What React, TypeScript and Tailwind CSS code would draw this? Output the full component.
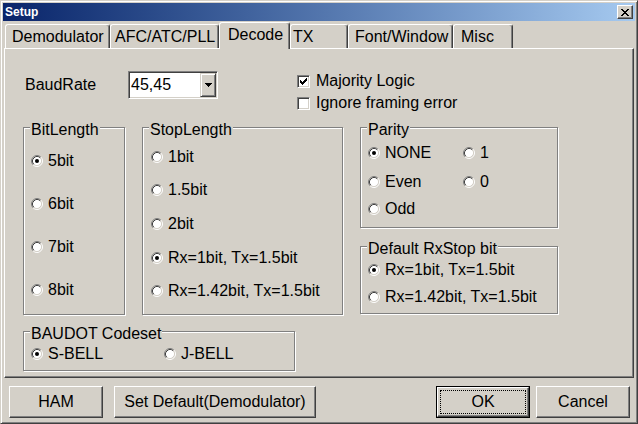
import React from 'react';

type Kids = { children?: React.ReactNode; className?: string };

const Radio = ({ checked }: { checked?: boolean }) => (
  <svg width="12" height="12" viewBox="0 0 12 12" className="shrink-0">
    <circle cx="6" cy="6" r="4.5" fill="#fff" />
    <path d="M2.11 9.89 A5.5 5.5 0 0 1 9.89 2.11" fill="none" stroke="#808080" />
    <path d="M9.89 2.11 A5.5 5.5 0 0 1 2.11 9.89" fill="none" stroke="#fff" />
    <path d="M2.82 9.18 A4.5 4.5 0 0 1 9.18 2.82" fill="none" stroke="#404040" />
    <path d="M9.18 2.82 A4.5 4.5 0 0 1 2.82 9.18" fill="none" stroke="#d4d0c8" />
    {checked && <circle cx="6" cy="6" r="2" fill="#000" />}
  </svg>
);

const Opt = ({ label, checked, className }: { label: string; checked?: boolean; className?: string }) => (
  <div className={`flex h-[20px] items-center gap-[5px] ${className ?? ''}`}>
    <Radio checked={checked} />
    <span className="leading-[20px] whitespace-nowrap">{label}</span>
  </div>
);

const Check = ({ checked }: { checked?: boolean }) => (
  <div className="flex h-[13px] w-[13px] shrink-0 items-center justify-center border border-t-[#808080] border-l-[#808080] border-r-white border-b-white bg-white shadow-[inset_1px_1px_0_#404040,inset_-1px_-1px_0_#d4d0c8]">
    {checked && (
      <svg width="7" height="7" viewBox="0 0 7 7" shapeRendering="crispEdges">
        <path
          d="M0 2h1v3h-1z M1 3h1v3h-1z M2 4h1v3h-1z M3 3h1v3h-1z M4 2h1v3h-1z M5 1h1v3h-1z M6 0h1v3h-1z"
          fill="#000"
        />
      </svg>
    )}
  </div>
);

// etched group box, title sits on the top line
const Group = ({ title, className, children }: Kids & { title: string }) => (
  <div
    className={`shrink-0 border border-[#808080] shadow-[1px_1px_0_#fff,inset_1px_1px_0_#fff] ${className ?? ''}`}
  >
    <div className="-mt-[8px] ml-[6px] w-fit bg-[#d4d0c8] px-[1px] leading-[20px] whitespace-nowrap">{title}</div>
    {children}
  </div>
);

const Tab = ({ label, className, active }: { label: string; className: string; active?: boolean }) => (
  <div
    className={`${className} shrink-0 rounded-t-[3px] border-t border-l border-r border-t-white border-l-white border-r-[#404040] pt-[2px] text-left leading-[20px] whitespace-nowrap shadow-[inset_-1px_0_0_#808080] ${
      active ? 'relative z-10 -mb-[1px] h-[27px] bg-[#d4d0c8]' : 'h-[24px]'
    }`}
  >
    {label}
  </div>
);

const Button = ({ children, className }: Kids) => (
  <div
    className={`flex h-[32px] shrink-0 items-center justify-center border border-t-white border-l-white border-r-[#404040] border-b-[#404040] shadow-[inset_-1px_-1px_0_#808080] ${className ?? ''}`}
  >
    {children}
  </div>
);

export default function App() {
  return (
    <div className="h-[424px] w-[638px] overflow-hidden bg-[#d4d0c8] font-['Liberation_Sans',Arial,sans-serif] text-[16px] text-black">
      <div className="flex h-full w-full flex-col border border-t-[#d4d0c8] border-l-[#d4d0c8] border-r-[#404040] border-b-[#404040] p-[2px] shadow-[inset_1px_1px_0_#fff,inset_-1px_-1px_0_#808080]">
        {/* title bar */}
        <div className="flex h-[18px] shrink-0 items-center bg-linear-to-r from-[#0a246a] to-[#a6caf0] pl-[2px]">
          <span className="text-[12px] font-bold leading-[18px] text-white">Setup</span>
          <div className="ml-auto mr-[2px] flex h-[14px] w-[16px] items-center justify-center border border-t-white border-l-white border-r-[#404040] border-b-[#404040] bg-[#d4d0c8] shadow-[inset_-1px_-1px_0_#808080]">
            <svg width="8" height="7" viewBox="0 0 8 7" shapeRendering="crispEdges">
              <path
                d="M0 0h2v1h-2z M6 0h2v1h-2z M1 1h2v1h-2z M5 1h2v1h-2z M2 2h4v1h-4z M3 3h2v1h-2z M2 4h4v1h-4z M1 5h2v1h-2z M5 5h2v1h-2z M0 6h2v1h-2z M6 6h2v1h-2z"
                fill="#000"
              />
            </svg>
          </div>
        </div>

        {/* tabs */}
        <div className="mx-[1px] mt-[1px] flex h-[26px] shrink-0 items-end pl-[1px]">
          <Tab label="Demodulator" className="w-[105px] pl-[6px]" />
          <Tab label="AFC/ATC/PLL" className="w-[109px] pl-[4px]" />
          <Tab label="Decode" className="w-[71px] pl-[8px]" active />
          <Tab label="TX" className="w-[58px] pl-[2px]" />
          <Tab label="Font/Window" className="w-[105px] pl-[6px]" />
          <Tab label="Misc" className="w-[60px] pl-[7px]" />
        </div>

        {/* panel */}
        <div className="mx-[1px] h-[330px] shrink-0 border border-t-white border-l-white border-r-[#404040] border-b-[#404040] pl-[18px] pt-[21px] shadow-[inset_-1px_-1px_0_#808080]">
          <div className="flex h-[44px] items-start">
            <div className="ml-[2px] mt-[1px] flex h-[28px] w-[103px] items-center">BaudRate</div>
            <div className="mt-[1px] flex h-[28px] w-[90px] border border-t-[#808080] border-l-[#808080] border-r-white border-b-white bg-white p-[1px] shadow-[inset_1px_1px_0_#404040,inset_-1px_-1px_0_#d4d0c8]">
              <span className="flex-1 pl-[1px] leading-[24px]">45,45</span>
              <div className="flex h-[24px] w-[16px] items-center justify-center border border-t-[#d4d0c8] border-l-[#d4d0c8] border-r-[#404040] border-b-[#404040] bg-[#d4d0c8] shadow-[inset_1px_1px_0_#fff,inset_-1px_-1px_0_#808080]">
                <svg width="7" height="4" viewBox="0 0 7 4" shapeRendering="crispEdges">
                  <path d="M0 0h7v1h-7z M1 1h5v1h-5z M2 2h3v1h-3z M3 3h1v1h-1z" fill="#000" />
                </svg>
              </div>
            </div>
            <div className="ml-[79px] flex flex-col">
              <div className="flex h-[22px] items-center gap-[6px]">
                <Check checked />
                <span>Majority Logic</span>
              </div>
              <div className="flex h-[22px] items-center gap-[6px]">
                <Check />
                <span>Ignore framing error</span>
              </div>
            </div>
          </div>

          <div className="mt-[13px] flex items-start gap-[17px]">
            <div className="flex flex-col">
              <div className="flex items-start gap-[17px]">
                <Group title="BitLength" className="h-[188px] w-[102px]">
                  <div className="flex flex-col gap-[23px] pl-[7px] pt-[11px]">
                    <Opt label="5bit" checked />
                    <Opt label="6bit" />
                    <Opt label="7bit" />
                    <Opt label="8bit" />
                  </div>
                </Group>
                <Group title="StopLength" className="h-[188px] w-[201px]">
                  <div className="flex flex-col pl-[8px]">
                    <Opt label="1bit" className="mt-[7px]" />
                    <Opt label="1.5bit" className="mt-[13px]" />
                    <Opt label="2bit" className="mt-[14px]" />
                    <Opt label="Rx=1bit, Tx=1.5bit" className="mt-[14px]" checked />
                    <Opt label="Rx=1.42bit, Tx=1.5bit" className="mt-[13px]" />
                  </div>
                </Group>
              </div>
              <Group title="BAUDOT Codeset" className="mt-[16px] h-[40px] w-[272px]">
                <div className="flex pl-[7px]">
                  <Opt label="S-BELL" checked className="h-[18px] w-[133px]" />
                  <Opt label="J-BELL" className="h-[18px]" />
                </div>
              </Group>
            </div>

            <div className="flex flex-col">
              <Group title="Parity" className="h-[101px] w-[198px]">
                <div className="flex flex-col pl-[7px]">
                  <div className="mt-[3px] flex">
                    <Opt label="NONE" checked className="w-[95px]" />
                    <Opt label="1" />
                  </div>
                  <div className="mt-[9px] flex">
                    <Opt label="Even" className="w-[95px]" />
                    <Opt label="0" />
                  </div>
                  <Opt label="Odd" className="mt-[7px]" />
                </div>
              </Group>
              <Group title="Default RxStop bit" className="mt-[18px] h-[68px] w-[198px]">
                <div className="flex flex-col pl-[7px]">
                  <Opt label="Rx=1bit, Tx=1.5bit" checked className="mt-[1px]" />
                  <Opt label="Rx=1.42bit, Tx=1.5bit" className="mt-[7px]" />
                </div>
              </Group>
            </div>
          </div>
        </div>

        {/* bottom buttons */}
        <div className="mt-[8px] flex shrink-0 items-start">
          <Button className="ml-[6px] w-[94px]">HAM</Button>
          <Button className="ml-[11px] w-[202px]">Set Default(Demodulator)</Button>
          <div className="ml-auto mr-[5px] flex gap-[6px]">
            <div className="h-[32px] w-[94px] border border-black">
              <div className="h-full w-full border border-t-white border-l-white border-r-[#404040] border-b-[#404040] p-[2px] shadow-[inset_-1px_-1px_0_#808080]">
                <div className="flex h-full w-full items-center justify-center border border-dotted border-black">OK</div>
              </div>
            </div>
            <Button className="w-[94px]">Cancel</Button>
          </div>
        </div>
      </div>
    </div>
  );
}
